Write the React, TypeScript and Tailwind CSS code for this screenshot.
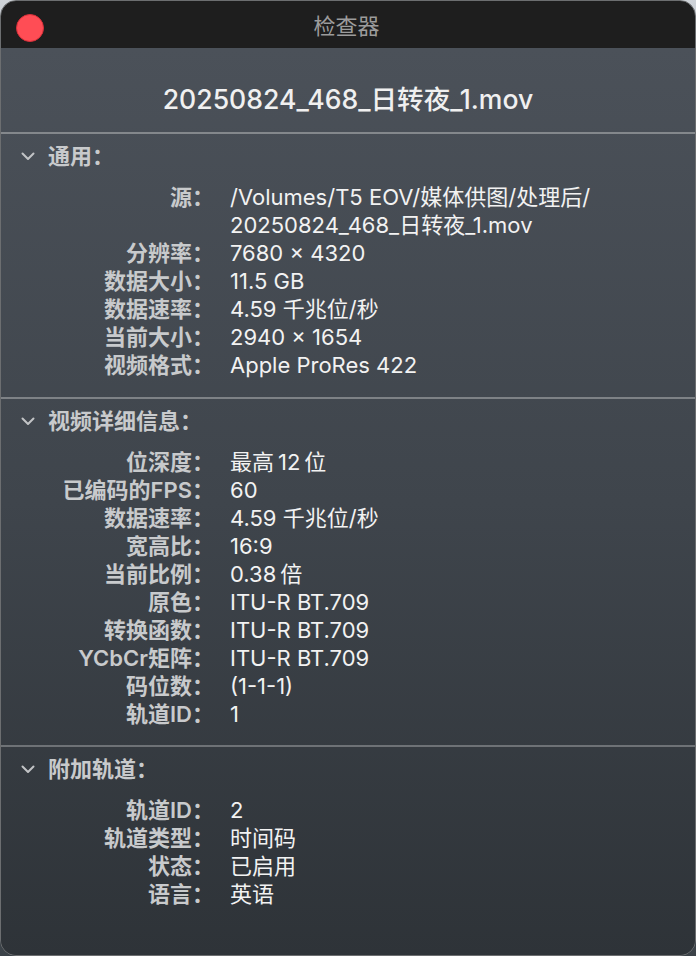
const font = {
  fontFamily: 'Inter, "Noto Sans CJK SC", sans-serif',
};

type Row = { label: string; value: React.ReactNode };

const general: Row[] = [
  {
    label: "源：",
    value: (
      <>
        /Volumes/T5 EOV/媒体供图/处理后/
        <br />
        20250824_468_日转夜_1.mov
      </>
    ),
  },
  { label: "分辨率：", value: "7680 × 4320" },
  { label: "数据大小：", value: "11.5 GB" },
  { label: "数据速率：", value: "4.59 千兆位/秒" },
  { label: "当前大小：", value: "2940 × 1654" },
  { label: "视频格式：", value: "Apple ProRes 422" },
];

const video: Row[] = [
  { label: "位深度：", value: "最高\u200912\u2009位" },
  { label: "已编码的FPS：", value: "60" },
  { label: "数据速率：", value: "4.59 千兆位/秒" },
  { label: "宽高比：", value: "16:9" },
  { label: "当前比例：", value: "0.38\u2009倍" },
  { label: "原色：", value: "ITU-R BT.709" },
  { label: "转换函数：", value: "ITU-R BT.709" },
  { label: "YCbCr矩阵：", value: "ITU-R BT.709" },
  { label: "码位数：", value: "(1-1-1)" },
  { label: "轨道ID：", value: "1" },
];

const extra: Row[] = [
  { label: "轨道ID：", value: "2" },
  { label: "轨道类型：", value: "时间码" },
  { label: "状态：", value: "已启用" },
  { label: "语言：", value: "英语" },
];

const Chevron = () => (
  <svg width="14" height="9" viewBox="0 0 14 9" fill="none">
    <path
      d="M1.5 1.5 L7 7 L12.5 1.5"
      stroke="#c2c4c6"
      strokeWidth="2"
      strokeLinecap="round"
      strokeLinejoin="round"
    />
  </svg>
);

const Section = ({
  title,
  rows,
  bottom,
}: {
  title: string;
  rows: Row[];
  bottom: string;
}) => (
  <section className={bottom}>
    <div className="flex h-[28px] items-center pl-[20px]">
      <Chevron />
      <span className="ml-[13px] text-[22px] font-semibold text-[#c8cacc]">
        {title}
      </span>
    </div>
    <div className="mt-[13px] grid grid-cols-[213px_1fr] gap-x-[16px]">
      {rows.map((r) => (
        <div key={r.label} className="contents">
          <div className="text-right text-[22px] leading-[28px] font-semibold text-[#c8cacc]">
            {r.label}
          </div>
          <div className="text-[22px] leading-[28px] text-[#f2f2f2]">
            {r.value}
          </div>
        </div>
      ))}
    </div>
  </section>
);

export default function App() {
  return (
    <div
      className="h-[956px] w-[696px] bg-linear-to-b from-[#cfd3d8] via-[#7b8288] to-[#3b4248]"
      style={font}
    >
      <div className="flex h-full w-full flex-col overflow-hidden rounded-[16px] border border-[#6c6e70]">
        <header className="relative flex h-[47px] shrink-0 items-center justify-center bg-[#1e1e1e] pt-[3px] pr-[3px]">
          <span className="absolute left-[15px] top-[13px] h-[28px] w-[28px] rounded-full border border-[#d8303a] bg-[#ff4d55]" />
          <span className="text-[22px] text-[#9c9c9c]">检查器</span>
        </header>
        <main className="flex-1 bg-linear-to-b from-[#4b5159] via-[#3f454c] to-[#2e3338]">
          <div className="flex h-[86px] items-center justify-center border-b-2 border-[#84888c] pt-[19px]">
            <span className="text-[26.6px] font-medium text-[#f0f0f0]">
              20250824_468_日转夜_1.mov
            </span>
          </div>
          <div className="pt-[8px]">
            <Section
              title="通用："
              rows={general}
              bottom="border-b-2 border-[#7e8286] pb-[18px]"
            />
          </div>
          <div className="pt-[8px]">
            <Section
              title="视频详细信息："
              rows={video}
              bottom="border-b-2 border-[#6e7276] pb-[17px]"
            />
          </div>
          <div className="pt-[8px]">
            <Section title="附加轨道：" rows={extra} bottom="" />
          </div>
        </main>
      </div>
    </div>
  );
}
